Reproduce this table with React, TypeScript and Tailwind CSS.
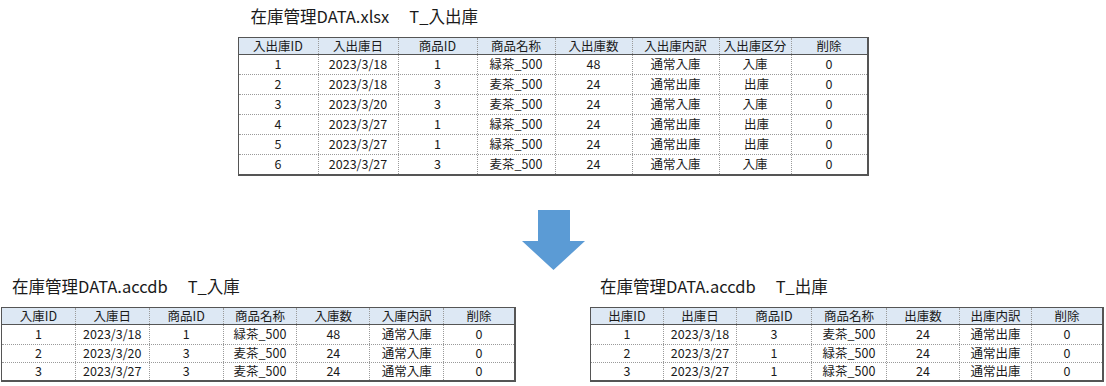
import type { FC } from "react";

type Col = { label: string; w: string };

interface TableProps {
  cols: Col[];
  rows: string[][];
  rowH: string;
  firstRowH: string;
}

const font = { fontFamily: '"Noto Sans CJK JP", "Noto Sans", sans-serif' };

// 入出庫
const mainCols: Col[] = [
  { label: "入出庫ID", w: "w-[79px]" },
  { label: "入出庫日", w: "w-[80px]" },
  { label: "商品ID", w: "w-[79px]" },
  { label: "商品名称", w: "w-[78px]" },
  { label: "入出庫数", w: "w-[77px]" },
  { label: "入出庫内訳", w: "w-[87px]" },
  { label: "入出庫区分", w: "w-[72px]" },
  { label: "削除", w: "w-[76px]" },
];

const mainRows = [
  ["1", "2023/3/18", "1", "緑茶_500", "48", "通常入庫", "入庫", "0"],
  ["2", "2023/3/18", "3", "麦茶_500", "24", "通常出庫", " 出庫", "0"],
  ["3", "2023/3/20", "3", "麦茶_500", "24", "通常入庫", "入庫", "0"],
  ["4", "2023/3/27", "1", "緑茶_500", "24", "通常出庫", " 出庫", "0"],
  ["5", "2023/3/27", "1", "緑茶_500", "24", "通常出庫", " 出庫", "0"],
  ["6", "2023/3/27", "3", "麦茶_500", "24", "通常入庫", "入庫", "0"],
];

const inCols: Col[] = [
  { label: "入庫ID", w: "w-[73px]" },
  { label: "入庫日", w: "w-[74px]" },
  { label: "商品ID", w: "w-[74px]" },
  { label: "商品名称", w: "w-[74px]" },
  { label: "入庫数", w: "w-[73px]" },
  { label: "入庫内訳", w: "w-[74px]" },
  { label: "削除", w: "w-[71px]" },
];

const inRows = [
  ["1", "2023/3/18", "1", "緑茶_500", "48", "通常入庫", "0"],
  ["2", "2023/3/20", "3", "麦茶_500", "24", "通常入庫", "0"],
  ["3", "2023/3/27", "3", "麦茶_500", "24", "通常入庫", "0"],
];

const outCols: Col[] = [
  { label: "出庫ID", w: "w-[72px]" },
  { label: "出庫日", w: "w-[73px]" },
  { label: "商品ID", w: "w-[75px]" },
  { label: "商品名称", w: "w-[75px]" },
  { label: "出庫数", w: "w-[73px]" },
  { label: "出庫内訳", w: "w-[72px]" },
  { label: "削除", w: "w-[71px]" },
];

const outRows = [
  ["1", "2023/3/18", "3", "麦茶_500", "24", "通常出庫", "0"],
  ["2", "2023/3/27", "1", "緑茶_500", "24", "通常出庫", "0"],
  ["3", "2023/3/27", "1", "緑茶_500", "24", "通常出庫", "0"],
];

const Table: FC<TableProps> = ({ cols, rows, rowH, firstRowH }) => (
  <div className="border-t border-l border-r-2 border-b-2 border-[#555555] bg-white text-[12.5px] text-[#1a1a1a]">
    {/* header */}
    <div className="flex h-[17px] border-b border-[#555555] bg-[#dde8f4]">
      {cols.map((c, i) => (
        <div
          key={c.label}
          className={`${c.w} flex items-center justify-center leading-none ${
            i > 0 ? "border-l border-dotted border-[#9a9a9a]" : ""
          }`}
        >
          {c.label}
        </div>
      ))}
    </div>
    {rows.map((r, ri) => (
      <div
        key={ri}
        className={`flex ${ri > 0 ? `${rowH} border-t border-dotted border-[#9a9a9a]` : firstRowH}`}
      >
        {r.map((v, ci) => (
          <div
            key={ci}
            className={`${cols[ci].w} flex items-center justify-center whitespace-pre leading-none ${
              ci > 0 ? "border-l border-dotted border-[#9a9a9a]" : ""
            }`}
          >
            {v}
          </div>
        ))}
      </div>
    ))}
  </div>
);

const Title: FC<{ file: string; table: string }> = ({ file, table }) => (
  <div className="flex h-[22px] items-center text-[16.5px] leading-none text-[#1a1a1a]">
    <span>{file}</span>
    <span className="ml-[20px]">{table}</span>
  </div>
);

export default function App() {
  return (
    <div className="flex h-[386px] w-[1106px] flex-col bg-white" style={font}>
      {/* top */}
      <div className="flex flex-col items-center pt-[5px]">
        <div className="w-[631px]">
          <div className="pl-[13px]">
            <Title file="在庫管理DATA.xlsx" table="T_入出庫" />
          </div>
          <div className="mt-[10px]">
            <Table cols={mainCols} rows={mainRows} rowH="h-[20px]" firstRowH="h-[19px]" />
          </div>
        </div>
      </div>

      {/* arrow */}
      <div className="mt-[34px] flex justify-center">
        <svg width="63" height="60" viewBox="0 0 63 60">
          <polygon points="16,0 48,0 48,31 63,31 31.5,60 0,31 16,31" fill="#5b9bd5" />
        </svg>
      </div>

      {/* bottom */}
      <div className="mt-[5px] flex justify-between pl-[1px] pr-[2px]">
        <div className="w-[515px]">
          <div className="pl-[11px]">
            <Title file="在庫管理DATA.accdb" table="T_入庫" />
          </div>
          <div className="mt-[10px]">
            <Table cols={inCols} rows={inRows} rowH="h-[18px]" firstRowH="h-[19px]" />
          </div>
        </div>
        <div className="w-[514px]">
          <div className="pl-[10px]">
            <Title file="在庫管理DATA.accdb" table="T_出庫" />
          </div>
          <div className="mt-[10px]">
            <Table cols={outCols} rows={outRows} rowH="h-[18px]" firstRowH="h-[19px]" />
          </div>
        </div>
      </div>
    </div>
  );
}
